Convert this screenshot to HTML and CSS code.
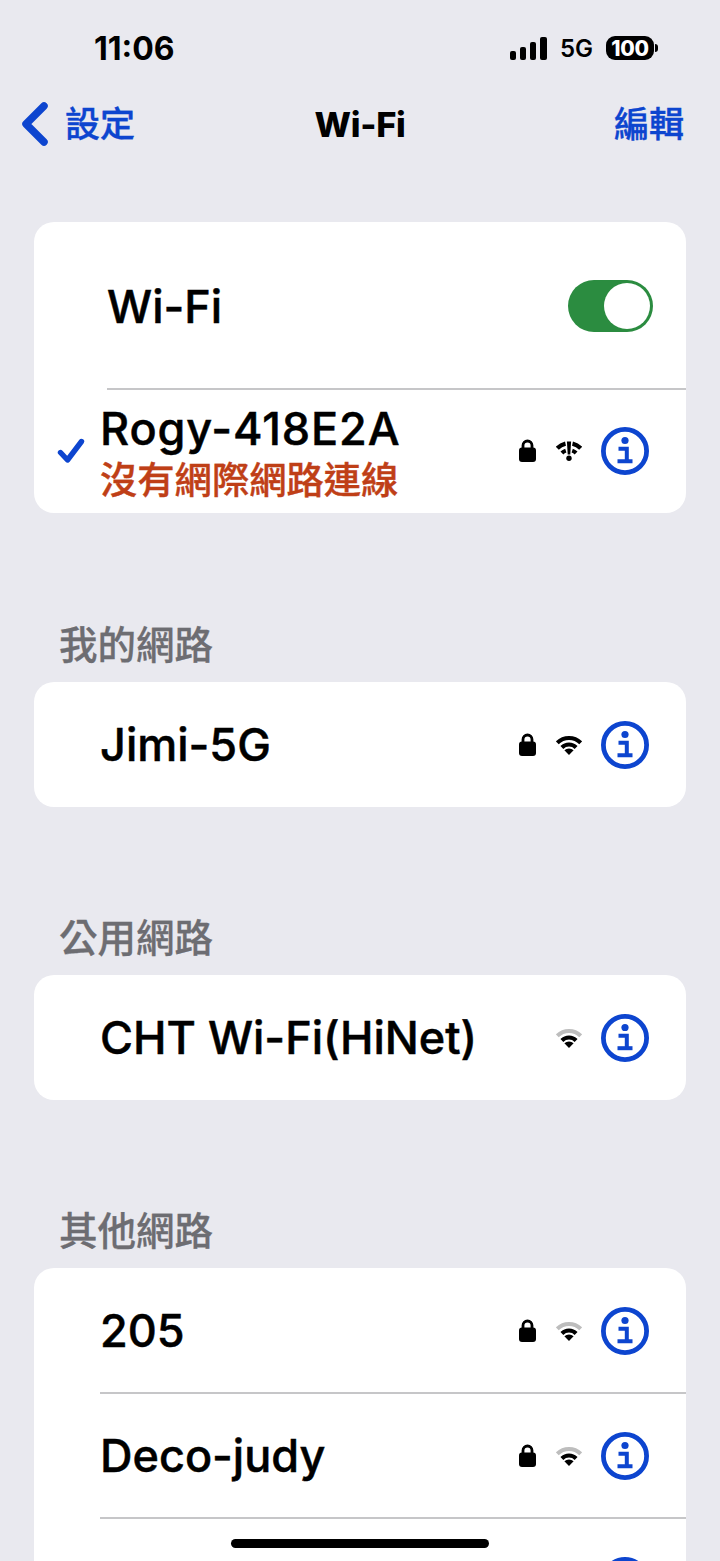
FILE: index.html
```html
<!DOCTYPE html>
<html lang="zh-Hant">
<head>
    <meta charset="UTF-8">
    <title>Wi-Fi</title>
    <link rel="stylesheet" href="styles.css">
</head>
<body>
    <!-- shared icons -->
    <svg class="defs" width="0" height="0">
        <symbol id="lock" viewBox="0 0 17 23">
            <path d="M4 10V6.5a4.5 4.5 0 0 1 9 0V10" fill="none" stroke="#000" stroke-width="2.8"/>
            <rect x="0" y="8.5" width="17" height="14.5" rx="3" fill="#000"/>
        </symbol>
        <symbol id="wifi" viewBox="0 0 26 19">
            <path d="M1.3 7.3A16.5 16.5 0 0 1 24.7 7.3" fill="none" stroke="#000" stroke-width="4"/>
            <path d="M5.9 12A10 10 0 0 1 20.1 12" fill="none" stroke="#000" stroke-width="4"/>
            <path d="M13 19.5 8.4 14.8A6.5 6.5 0 0 1 17.6 14.8Z" fill="#000"/>
        </symbol>
        <symbol id="wifi-weak" viewBox="0 0 26 19">
            <path d="M1.3 7.3A16.5 16.5 0 0 1 24.7 7.3" fill="none" stroke="#bdbdbd" stroke-width="4"/>
            <path d="M5.9 12A10 10 0 0 1 20.1 12" fill="none" stroke="#000" stroke-width="4"/>
            <path d="M13 19.5 8.4 14.8A6.5 6.5 0 0 1 17.6 14.8Z" fill="#000"/>
        </symbol>
        <symbol id="wifi-alert" viewBox="0 0 26 20">
            <path d="M1.3 7.3A16.5 16.5 0 0 1 9.5 2.6M16.5 2.6A16.5 16.5 0 0 1 24.7 7.3" fill="none" stroke="#000" stroke-width="4.2"/>
            <path d="M5.9 12A10 10 0 0 1 9.8 9.6M16.2 9.6A10 10 0 0 1 20.1 12" fill="none" stroke="#000" stroke-width="4"/>
            <path d="M10.9 0.5H15.1L14.3 13.5H11.7Z" fill="#000"/>
            <circle cx="13" cy="17.3" r="2.7" fill="#000"/>
        </symbol>
        <symbol id="info" viewBox="0 0 48 48">
            <circle cx="24" cy="24" r="21.6" fill="none" stroke="#0d45cf" stroke-width="4.8"/>
            <circle cx="24" cy="13.5" r="3.6" fill="#0d45cf"/>
            <path d="M17.5 21.8H25.8V33.5" fill="none" stroke="#0d45cf" stroke-width="4"/>
            <path d="M16.5 34.2H31.5" fill="none" stroke="#0d45cf" stroke-width="4"/>
        </symbol>
    </svg>

    <div class="phone">
        <div class="status-bar">
            <span class="time">11:06</span>
            <div class="status-right">
                <div class="signal">
                    <i class="bar bar-1"></i>
                    <i class="bar bar-2"></i>
                    <i class="bar bar-3"></i>
                    <i class="bar bar-4"></i>
                </div>
                <span class="network">5G</span>
                <div class="battery"><span>100</span></div>
                <i class="battery-nub"></i>
            </div>
        </div>

        <div class="nav-bar">
            <a class="nav-back">
                <svg class="chevron" width="26" height="44" viewBox="0 0 26 44">
                    <path d="M22 4 4 22 22 40" fill="none" stroke="#0d45cf" stroke-width="7.5" stroke-linecap="round" stroke-linejoin="round"/>
                </svg>
                <span class="nav-text">設定</span>
            </a>
            <div class="nav-title">Wi-Fi</div>
            <a class="nav-edit nav-text">編輯</a>
        </div>

        <div class="card card-top">
            <div class="toggle-row">
                <span class="toggle-label">Wi-Fi</span>
                <div class="toggle"><i class="knob"></i></div>
            </div>
            <div class="row row-line row-connected">
                <svg class="check" width="28" height="26" viewBox="0 0 28 26">
                    <path d="M3.5 14.5 10.5 22 24.5 3.5" fill="none" stroke="#0d45cf" stroke-width="5.4" stroke-linecap="round" stroke-linejoin="round"/>
                </svg>
                <div class="connected-text">
                    <div class="name">Rogy-418E2A</div>
                    <div class="warning">沒有網際網路連線</div>
                </div>
                <svg class="icon-lock"><use href="#lock"/></svg>
                <svg class="icon-wifi"><use href="#wifi-alert"/></svg>
                <svg class="icon-info"><use href="#info"/></svg>
            </div>
        </div>

        <div class="section-title section-first">我的網路</div>
        <div class="card">
            <div class="row">
                <span class="name">Jimi-5G</span>
                <svg class="icon-lock"><use href="#lock"/></svg>
                <svg class="icon-wifi"><use href="#wifi"/></svg>
                <svg class="icon-info"><use href="#info"/></svg>
            </div>
        </div>

        <div class="section-title">公用網路</div>
        <div class="card">
            <div class="row">
                <span class="name">CHT Wi-Fi(HiNet)</span>
                <svg class="icon-wifi"><use href="#wifi-weak"/></svg>
                <svg class="icon-info"><use href="#info"/></svg>
            </div>
        </div>

        <div class="section-title">其他網路</div>
        <div class="card">
            <div class="row">
                <span class="name">205</span>
                <svg class="icon-lock"><use href="#lock"/></svg>
                <svg class="icon-wifi"><use href="#wifi-weak"/></svg>
                <svg class="icon-info"><use href="#info"/></svg>
            </div>
            <div class="row row-line">
                <span class="name">Deco-judy</span>
                <svg class="icon-lock"><use href="#lock"/></svg>
                <svg class="icon-wifi"><use href="#wifi-weak"/></svg>
                <svg class="icon-info"><use href="#info"/></svg>
            </div>
            <div class="row row-line">
                <span class="name"></span>
                <svg class="icon-info"><use href="#info"/></svg>
            </div>
        </div>

        <div class="home-indicator"></div>
    </div>
</body>
</html>
```

FILE: styles.css
```css
html, body {
    margin: 0;
    height: 100%;
}
body {
    font-family: Inter, "Noto Sans CJK TC", sans-serif;
    background-color: #e9e9ef;
    color: #000;
}
.defs {
    position: absolute;
}
.phone {
    position: relative;
    width: 720px;
    height: 1561px;
    overflow: hidden;
}

/* status bar */
.status-bar {
    display: flex;
    justify-content: space-between;
    align-items: center;
    height: 96px;
    padding: 0 62px 0 94px;
    box-sizing: border-box;
}
.time {
    font-size: 32px;
    font-weight: 700;
}
.status-right {
    display: flex;
    align-items: center;
}
.signal {
    display: flex;
    align-items: flex-end;
    gap: 4px;
    height: 23px;
    margin-right: 13px;
}
.bar {
    display: block;
    width: 6px;
    background-color: #000;
    border-radius: 2px;
}
.bar-1 { height: 9px; }
.bar-2 { height: 13px; }
.bar-3 { height: 18px; }
.bar-4 { height: 23px; width: 7px; }
.network {
    font-size: 24px;
    font-weight: 600;
    margin-right: 13px;
}
.battery {
    display: flex;
    justify-content: center;
    align-items: center;
    width: 48px;
    height: 24px;
    background-color: #000;
    border-radius: 9px;
    color: #fff;
    font-size: 21px;
    font-weight: 800;
    letter-spacing: -0.3px;
}
.battery-nub {
    display: block;
    width: 3px;
    height: 8px;
    margin-left: 1px;
    background-color: #000;
    border-radius: 0 3px 3px 0;
}

/* navigation */
.nav-bar {
    display: grid;
    grid-template-columns: 1fr auto 1fr;
    align-items: center;
    height: 56px;
    padding: 0 36px;
}
.nav-back {
    display: flex;
    align-items: center;
    gap: 17px;
    margin-left: -14px;
    color: #0d45cf;
}
.nav-text {
    font-size: 35px;
    font-weight: 500;
    line-height: 40px;
    color: #0d45cf;
    -webkit-text-stroke: 0.4px #0d45cf;
}
.nav-title {
    font-size: 34.5px;
    font-weight: 800;
    letter-spacing: -0.3px;
}
.nav-edit {
    justify-self: end;
}

/* grouped lists */
.card {
    margin: 0 34px;
    background-color: #fff;
    border-radius: 20px;
    overflow: hidden;
}
.card-top {
    margin-top: 70px;
}
.toggle-row {
    display: flex;
    justify-content: space-between;
    align-items: center;
    height: 166px;
    padding: 2px 33px 0 73px;
    box-sizing: border-box;
}
.toggle-label {
    font-size: 45px;
    font-weight: 500;
    -webkit-text-stroke: 0.5px #000;
}
.toggle {
    display: flex;
    justify-content: flex-end;
    align-items: center;
    width: 85px;
    height: 52px;
    padding: 0 3px;
    box-sizing: border-box;
    background-color: #2b8c40;
    border-radius: 26px;
}
.knob {
    display: block;
    width: 46px;
    height: 46px;
    background-color: #fff;
    border-radius: 50%;
}
.row {
    display: flex;
    align-items: center;
    height: 125px;
    padding: 0 37px 0 66px;
    box-sizing: border-box;
}
.row-line {
    position: relative;
}
.row-line::before {
    content: "";
    position: absolute;
    top: -1px;
    left: 66px;
    right: 0;
    height: 2px;
    background-color: #c6c6c8;
}
.row-connected {
    padding-left: 23px;
}
.row-connected::before {
    top: 0;
    left: 73px;
}
.row-connected .name {
    letter-spacing: 0.9px;
}
.check {
    flex: none;
    margin-right: 15px;
}
.connected-text {
    margin-top: 3px;
}
.name {
    font-size: 45px;
    font-weight: 500;
    line-height: 52px;
    -webkit-text-stroke: 0.5px #000;
}
.warning {
    font-size: 37.3px;
    font-weight: 500;
    line-height: 42px;
    margin-top: 5px;
    color: #bf3f17;
    -webkit-text-stroke: 0.4px #bf3f17;
}
.icon-lock {
    flex: none;
    width: 17px;
    height: 23px;
    margin-left: auto;
}
.icon-wifi {
    flex: none;
    width: 26px;
    height: 20px;
    margin-left: 20px;
}
.name + .icon-wifi,
.name + .icon-info {
    margin-left: auto;
}
.icon-info {
    flex: none;
    width: 48px;
    height: 48px;
    margin-left: 19px;
}
.section-title {
    margin: 108px 0 14px 59px;
    font-size: 38.5px;
    font-weight: 500;
    line-height: 46px;
    color: #6d6d72;
    -webkit-text-stroke: 0.3px #6d6d72;
}
.section-first {
    margin-top: 109px;
}

.home-indicator {
    position: absolute;
    left: 231px;
    bottom: 13px;
    width: 258px;
    height: 9px;
    background-color: #000;
    border-radius: 5px;
}
```
